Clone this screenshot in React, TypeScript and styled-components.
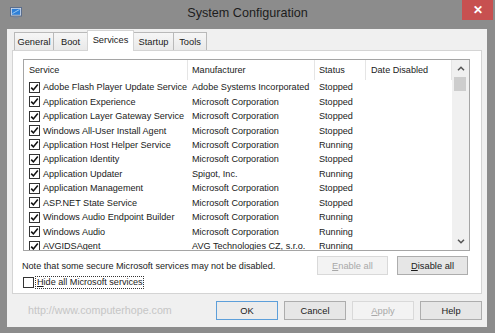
import React from "react"
import styled, { createGlobalStyle, css } from "styled-components"

type Service = {
  name: string
  manufacturer: string
  status: "Running" | "Stopped"
}

const services: Service[] = [
  { name: "Adobe Flash Player Update Service", manufacturer: "Adobe Systems Incorporated", status: "Stopped" },
  { name: "Application Experience", manufacturer: "Microsoft Corporation", status: "Stopped" },
  { name: "Application Layer Gateway Service", manufacturer: "Microsoft Corporation", status: "Stopped" },
  { name: "Windows All-User Install Agent", manufacturer: "Microsoft Corporation", status: "Stopped" },
  { name: "Application Host Helper Service", manufacturer: "Microsoft Corporation", status: "Running" },
  { name: "Application Identity", manufacturer: "Microsoft Corporation", status: "Stopped" },
  { name: "Application Updater", manufacturer: "Spigot, Inc.", status: "Running" },
  { name: "Application Management", manufacturer: "Microsoft Corporation", status: "Stopped" },
  { name: "ASP.NET State Service", manufacturer: "Microsoft Corporation", status: "Stopped" },
  { name: "Windows Audio Endpoint Builder", manufacturer: "Microsoft Corporation", status: "Running" },
  { name: "Windows Audio", manufacturer: "Microsoft Corporation", status: "Running" },
  { name: "AVGIDSAgent", manufacturer: "AVG Technologies CZ, s.r.o.", status: "Running" },
]

const tabs = [
  { label: "General", width: 40 },
  { label: "Boot", width: 35 },
  { label: "Services", width: 47 },
  { label: "Startup", width: 41 },
  { label: "Tools", width: 34 },
]

const UI_FONT = `"Liberation Sans", Arial, sans-serif`
const TEXT_SIZE = "9.1px"
const COLUMNS = "164px 127px 51px 86px"

const GlobalStyle = createGlobalStyle`
  html, body {
    margin: 0;
    padding: 0;
  }
  body {
    background: #8c8c8c;
    font-family: ${UI_FONT};
  }
`

const Window = styled.div`
  width: 495px;
  height: 333px;
  background: #8c8c8c;
  display: flex;
  flex-direction: column;
  overflow: hidden;
`

const TitleBar = styled.div`
  height: 29px;
  display: grid;
  grid-template-columns: 1fr auto 1fr;
  align-items: start;
`

const AppIcon = styled.svg`
  justify-self: start;
  margin: 7px 0 0 10px;
`

const Title = styled.div`
  padding-top: 6px;
  font-size: 12.6px;
  line-height: 15px;
  color: #1c1c1c;
`

const CloseButton = styled.div`
  justify-self: end;
  margin-right: 2px;
  width: 31px;
  height: 20px;
  background: #c75050;
  color: #fff;
  font-size: 12px;
  font-weight: bold;
  display: flex;
  align-items: center;
  justify-content: center;
`

const Client = styled.div`
  margin: 0 8px 0 7px;
  height: 298px;
  background: #f0f0f0;
  display: flex;
  flex-direction: column;
`

const TabStrip = styled.div`
  height: 21px;
  padding-left: 7px;
  display: flex;
  align-items: flex-end;
`

const Tab = styled.div<{ $active?: boolean; $width: number }>`
  box-sizing: border-box;
  width: ${(p) => p.$width}px;
  height: 18px;
  margin-left: -1px;
  border: 1px solid #b9b9b9;
  border-bottom: none;
  background: linear-gradient(#f6f6f6, #e9e9e9);
  font-size: 9.3px;
  color: #1a1a1a;
  display: flex;
  align-items: center;
  justify-content: center;
  &:first-child {
    margin-left: 0;
  }
  ${(p) =>
    p.$active &&
    css`
      height: 21px;
      margin-bottom: -1px;
      border-color: #d4d4d4;
      background: #fff;
      position: relative;
      z-index: 1;
      padding-bottom: 2px;
    `}
`

const Panel = styled.div`
  box-sizing: border-box;
  margin: 0 5px;
  height: 244px;
  border: 1px solid #d4d4d4;
  background: #fff;
  padding: 8px 11px 0 10px;
  display: flex;
  flex-direction: column;
`

const ListBox = styled.div`
  box-sizing: border-box;
  width: 447px;
  height: 192px;
  border: 1px solid #a5a5a5;
  display: flex;
  background: #fff;
`

const ListBody = styled.div`
  flex: 1;
  display: flex;
  flex-direction: column;
  overflow: hidden;
`

const HeaderRow = styled.div`
  flex: none;
  height: 20px;
  display: grid;
  grid-template-columns: ${COLUMNS};
`

const HeaderCell = styled.div<{ $pad?: number }>`
  padding-left: ${(p) => p.$pad ?? 4}px;
  border-right: 1px solid #e5e5e5;
  font-size: ${TEXT_SIZE};
  color: #1a1a1a;
  display: flex;
  align-items: center;
`

const Row = styled.div`
  flex: none;
  height: 14.45px;
  display: grid;
  grid-template-columns: ${COLUMNS};
  align-items: center;
  font-size: ${TEXT_SIZE};
  color: #1a1a1a;
  white-space: nowrap;
`

const Cell = styled.div<{ $pad?: number }>`
  padding-left: ${(p) => p.$pad ?? 4}px;
  overflow: hidden;
`

const ServiceCell = styled.div`
  padding-left: 5px;
  display: flex;
  align-items: center;
  gap: 3px;
`

const Box = styled.div`
  box-sizing: border-box;
  flex: none;
  width: 11px;
  height: 11px;
  border: 1px solid #333;
  background: #fff;
  display: flex;
  align-items: center;
  justify-content: center;
`

const ScrollBar = styled.div`
  flex: none;
  width: 17px;
  background: #f0f0f0;
  display: flex;
  flex-direction: column;
`

const ArrowBox = styled.div`
  height: 17px;
  display: flex;
  align-items: center;
  justify-content: center;
`

const Thumb = styled.div`
  height: 14px;
  margin: 0 3px 0 2px;
  background: #cdcdcd;
`

const Track = styled.div`
  flex: 1;
`

const ActionRow = styled.div`
  margin-top: 5px;
  padding-right: 2px;
  display: flex;
  align-items: center;
  gap: 9px;
`

const Note = styled.div`
  flex: 1;
  margin-left: -1px;
  font-size: ${TEXT_SIZE};
  color: #1a1a1a;
  white-space: nowrap;
`

const Button = styled.div<{ $width?: number; $disabled?: boolean; $default?: boolean }>`
  box-sizing: border-box;
  width: ${(p) => p.$width ?? 71}px;
  height: 19px;
  border: 1px solid #adadad;
  background: #e6e6e6;
  font-size: 9.3px;
  color: #1a1a1a;
  display: flex;
  align-items: center;
  justify-content: center;
  ${(p) =>
    p.$disabled &&
    css`
      border-color: #d9d9d9;
      background: #f3f3f3;
      color: #a8a8a8;
    `}
  ${(p) =>
    p.$default &&
    css`
      border-color: #5d9fda;
      background: #ececec;
    `}
`

const HideRow = styled.div`
  margin-top: 1px;
  display: flex;
  align-items: center;
  gap: 1px;
`

const FocusLabel = styled.div`
  padding: 0 0 0 1px;
  border: 1px dotted #333;
  font-size: ${TEXT_SIZE};
  line-height: 11px;
  color: #1a1a1a;
`

const BottomBar = styled.div`
  flex: 1;
  padding: 7px 5px 0 21px;
  display: flex;
  align-items: flex-start;
  gap: 6px;
`

const Watermark = styled.div`
  flex: 1;
  padding-top: 3px;
  font-family: "Liberation Sans", Arial, sans-serif;
  font-size: 10.7px;
  color: #c6c6c6;
`

const Check = () => (
  <svg width="9" height="9" viewBox="0 0 9 9">
    <path d="M1.2 4.6 L3.4 6.9 L7.8 1.6" fill="none" stroke="#111" strokeWidth="1.6" />
  </svg>
)

const Checkbox = ({ checked }: { checked?: boolean }) => <Box>{checked && <Check />}</Box>

const Chevron = ({ up }: { up?: boolean }) => (
  <svg width="8" height="5" viewBox="0 0 8 5">
    <path d={up ? "M1 4.2 L4 1.2 L7 4.2" : "M1 0.8 L4 3.8 L7 0.8"} fill="none" stroke="#555" strokeWidth="1.5" />
  </svg>
)

const MonitorIcon = () => (
  <AppIcon width="12" height="12" viewBox="0 0 12 12">
    <rect x="0.5" y="0.5" width="11" height="8.5" fill="#d8dde6" stroke="#5a6d8c" />
    <rect x="1.8" y="1.8" width="8.4" height="6" fill="#2f7fd6" />
    <path d="M2.5 6.5 L9.5 2.5" stroke="#9cc8f2" strokeWidth="1" />
    <rect x="3.5" y="9.5" width="5" height="2" fill="#7c8799" />
  </AppIcon>
)

export default function App() {
  return (
    <>
      <GlobalStyle />
      <Window>
        <TitleBar>
          <MonitorIcon />
          <Title>System Configuration</Title>
          <CloseButton>✕</CloseButton>
        </TitleBar>
        <Client>
          <TabStrip>
            {tabs.map((t) => (
              <Tab key={t.label} $width={t.width} $active={t.label === "Services"}>
                {t.label}
              </Tab>
            ))}
          </TabStrip>
          <Panel>
            <ListBox>
              <ListBody>
                <HeaderRow>
                  <HeaderCell $pad={5}>Service</HeaderCell>
                  <HeaderCell>Manufacturer</HeaderCell>
                  <HeaderCell>Status</HeaderCell>
                  <HeaderCell $pad={5}>Date Disabled</HeaderCell>
                </HeaderRow>
                {services.map((s) => (
                  <Row key={s.name}>
                    <ServiceCell>
                      <Checkbox checked />
                      {s.name}
                    </ServiceCell>
                    <Cell>{s.manufacturer}</Cell>
                    <Cell>{s.status}</Cell>
                    <Cell $pad={5} />
                  </Row>
                ))}
              </ListBody>
              <ScrollBar>
                <ArrowBox>
                  <Chevron up />
                </ArrowBox>
                <Thumb />
                <Track />
                <ArrowBox>
                  <Chevron />
                </ArrowBox>
              </ScrollBar>
            </ListBox>
            <ActionRow>
              <Note>Note that some secure Microsoft services may not be disabled.</Note>
              <Button $disabled>
                <u>E</u>nable all
              </Button>
              <Button>
                <u>D</u>isable all
              </Button>
            </ActionRow>
            <HideRow>
              <Checkbox />
              <FocusLabel>
                <u>H</u>ide all Microsoft services
              </FocusLabel>
            </HideRow>
          </Panel>
          <BottomBar>
            <Watermark>http://www.computerhope.com</Watermark>
            <Button $width={62} $default>
              OK
            </Button>
            <Button $width={62}>Cancel</Button>
            <Button $width={62} $disabled>
              <u>A</u>pply
            </Button>
            <Button $width={62}>Help</Button>
          </BottomBar>
        </Client>
      </Window>
    </>
  )
}
